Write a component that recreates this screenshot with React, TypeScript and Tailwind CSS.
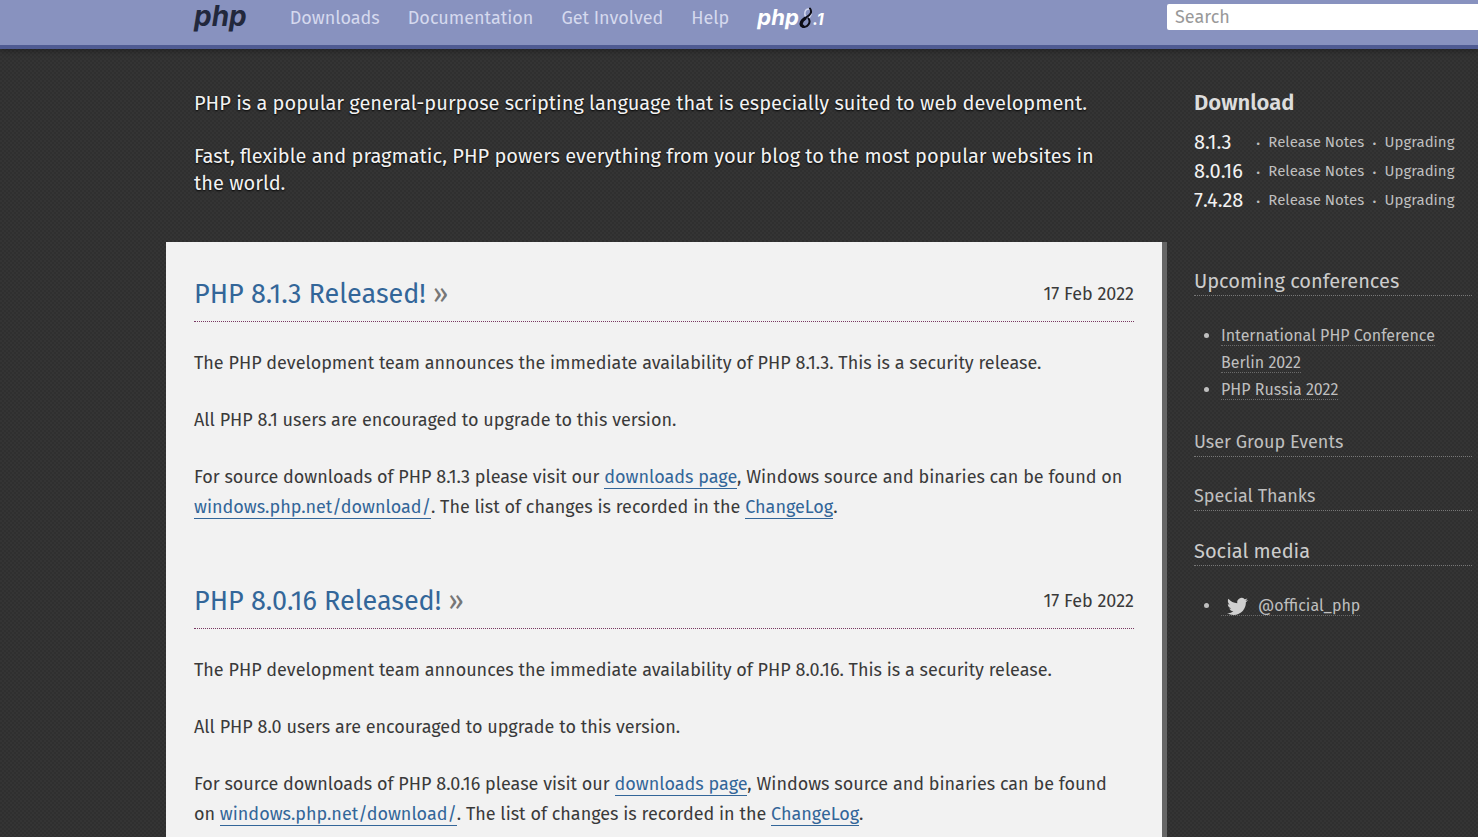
import type { ReactNode } from "react";

const darkTexture =
  "bg-[#333333] bg-[conic-gradient(#2f2f2f_25%,#343434_0_50%,#2f2f2f_0_75%,#343434_0)] bg-[length:4px_4px]";

const navLinks = ["Downloads", "Documentation", "Get Involved", "Help"];
const versions = ["8.1.3", "8.0.16", "7.4.28"];

const releases = [
  { version: "8.1.3", branch: "8.1", date: "17 Feb 2022" },
  { version: "8.0.16", branch: "8.0", date: "17 Feb 2022" },
];

function Php81Logo() {
  return (
    <a
      href="#php81"
      aria-label="PHP 8.1"
      className="flex items-baseline [font-family:Inter,sans-serif] text-[22px] leading-6 font-bold text-white italic"
    >
      <span>php</span>
      <svg viewBox="0 0 14 22" className="h-[22px] w-[14px] self-center" fill="none" aria-hidden="true">
        <path d="M7 10C4.500 7 6 2 9.500 2C13 2 13.500 7 10 11" stroke="#d5d8ee" strokeWidth="1.500" />
        <path
          d="M11 1.500C13.500 5 11.500 8 7 10.500C1 13.500 0 18.500 4 19.800C8 21 12.500 15.500 9.500 11.500"
          stroke="#0d0d16"
          strokeWidth="2"
          strokeLinecap="round"
        />
        <path d="M6 11.500C1.500 14.500 1.500 18.500 4 19.300" stroke="#0d0d16" strokeWidth="3" strokeLinecap="round" />
      </svg>
      <span className="text-base">.1</span>
    </a>
  );
}

function TextLink({ children }: { children: ReactNode }) {
  return (
    <a href="#link" className="border-b border-[#336699] text-[#336699]">
      {children}
    </a>
  );
}

function SideLink({ children }: { children: ReactNode }) {
  return (
    <a href="#link" className="border-b border-dotted border-[#6a6a6a]">
      {children}
    </a>
  );
}

function Release({ version, branch, date }: { version: string; branch: string; date: string }) {
  return (
    <article>
      <header className="flex items-center justify-between border-b border-dotted border-[#793862] pb-[7px]">
        <h2 className="text-[27px] leading-10 text-[#336699]">
          <a href="#release">
            PHP {version} Released! <span className="text-[#777777]">»</span>
          </a>
        </h2>
        <time className="text-lg">{date}</time>
      </header>
      <div className="mt-[26px] flex flex-col gap-[27px] pr-1 text-lg leading-[30px]">
        <p>
          The PHP development team announces the immediate availability of PHP {version}. This is a security release.
        </p>
        <p>All PHP {branch} users are encouraged to upgrade to this version.</p>
        <p>
          For source downloads of PHP {version} please visit our <TextLink>downloads page</TextLink>, Windows source
          and binaries can be found on <TextLink>windows.php.net/download/</TextLink>. The list of changes is recorded
          in the <TextLink>ChangeLog</TextLink>.
        </p>
      </div>
    </article>
  );
}

export default function App() {
  return (
    <div className={`flex min-h-screen flex-col overflow-x-hidden font-['Fira_Sans','Noto_Sans',sans-serif] ${darkTexture}`}>
      <header className="flex h-[49px] border-b-4 border-[#4F5B93] bg-[#8892BF] pl-[194px] shadow-[0_2px_5px_rgba(0,0,0,0.3)]">
        <nav className="flex h-[35px] flex-1 items-center gap-7 text-lg text-[#d5d9ee]">
          <a
            href="#home"
            className="mr-[15px] pb-1 [font-family:Inter,sans-serif] text-[28px] leading-8 font-bold text-[#22283c] italic"
          >
            php
          </a>
          {navLinks.map((label) => (
            <a key={label} href="#nav">
              {label}
            </a>
          ))}
          <Php81Logo />
        </nav>
        <form className="w-[311px] pt-1">
          <input
            type="search"
            aria-label="Search"
            placeholder="Search"
            className="h-[26px] w-full rounded-l-xs bg-white px-2 text-lg placeholder:text-[#999999]"
          />
        </form>
      </header>

      <div className="flex flex-1 pl-[166px]">
        <main className="flex min-w-0 flex-1 flex-col">
          <section className="flex flex-col gap-[26px] pt-[41px] pr-12 pb-[45px] pl-7 text-[20px] leading-[27px] text-[#f2f2f2] [text-shadow:0_1px_2px_#000]">
            <p>PHP is a popular general-purpose scripting language that is especially suited to web development.</p>
            <p>
              Fast, flexible and pragmatic, PHP powers everything from your blog to the most popular websites in the
              world.
            </p>
          </section>
          <section className="flex flex-1 flex-col gap-[59px] border-r-[5px] border-[#666666] bg-[#F2F2F2] px-7 pt-8 pb-12 text-[#3a3a3a]">
            {releases.map((release) => (
              <Release key={release.version} {...release} />
            ))}
          </section>
        </main>

        <aside className="w-[311px] pt-10 pr-1.5 pl-[27px] text-[#bfbfbf]">
          <h2 className="text-[22px] leading-7 font-semibold text-[#dddddd]">Download</h2>
          <ul className="mt-[11px] text-[15px] leading-[29px]">
            {versions.map((version) => (
              <li key={version} className="flex h-[29px] items-center gap-2 whitespace-nowrap">
                <a href="#download" className="w-[54px] text-[20px] text-[#f2f2f2]">
                  {version}
                </a>
                <span className="text-lg">·</span>
                <a href="#notes">Release Notes</a>
                <span className="text-lg">·</span>
                <a href="#upgrading">Upgrading</a>
              </li>
            ))}
          </ul>

          <h3 className="mt-[53px] border-b border-dotted border-[#777777] text-[20px] leading-[27px] text-[#cccccc]">
            Upcoming conferences
          </h3>
          <ul className="mt-[26px] list-disc pl-[27px] text-base leading-[27px]">
            <li>
              <SideLink>International PHP Conference Berlin 2022</SideLink>
            </li>
            <li>
              <SideLink>PHP Russia 2022</SideLink>
            </li>
          </ul>
          <h3 className="mt-[26px] border-b border-dotted border-[#777777] text-lg leading-[27px]">
            <a href="#events">User Group Events</a>
          </h3>
          <h3 className="mt-[26px] border-b border-dotted border-[#777777] text-lg leading-[27px]">
            <a href="#thanks">Special Thanks</a>
          </h3>
          <h3 className="mt-[27px] border-b border-dotted border-[#777777] text-[20px] leading-[27px] text-[#cccccc]">
            Social media
          </h3>
          <ul className="mt-[26px] list-disc pl-[27px] text-base leading-[27px]">
            <li>
              <SideLink>
                <svg viewBox="0 0 24 24" className="mr-2.5 ml-1.5 inline size-[21px]" fill="#d0d0d0" aria-hidden="true">
                  <path d="M23.953 4.570a10 10 0 01-2.825.775 4.958 4.958 0 002.163-2.723c-.951.555-2.005.959-3.127 1.184a4.920 4.920 0 00-8.384 4.482C7.690 8.095 4.067 6.130 1.640 3.162a4.822 4.822 0 00-.666 2.475c0 1.710.870 3.213 2.188 4.096a4.904 4.904 0 01-2.228-.616v.060a4.923 4.923 0 003.946 4.827 4.996 4.996 0 01-2.212.085 4.936 4.936 0 004.604 3.417 9.867 9.867 0 01-6.102 2.105c-.390 0-.779-.023-1.170-.067a13.995 13.995 0 007.557 2.209c9.053 0 13.998-7.496 13.998-13.985 0-.210 0-.420-.015-.630A9.935 9.935 0 0024 4.590z" />
                </svg>
                @official_php
              </SideLink>
            </li>
          </ul>
        </aside>
      </div>
    </div>
  );
}
